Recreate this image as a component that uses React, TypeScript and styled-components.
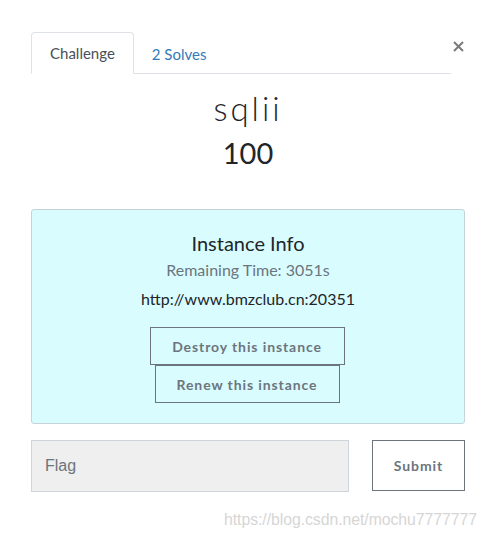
import React from "react";
import styled, { createGlobalStyle } from "styled-components";

const Global = createGlobalStyle`
  html, body { margin: 0; padding: 0; background: #fff; }
  body { font-family: Lato, "Open Sans", sans-serif; color: #212529; }
  * { box-sizing: border-box; }
`;

const Page = styled.div`
  width: 487px;
  height: 538px;
  padding: 32px 22px 0 31px;
  position: relative;
  overflow: hidden;
`;

const Header = styled.div`
  display: flex;
  align-items: flex-start;
`;

const Nav = styled.div`
  display: flex;
  width: 420px;
  border-bottom: 1px solid #dee2e6;
  height: 42px;
`;

const Tab = styled.div<{ $active?: boolean }>`
  height: 42px;
  padding: 0 ${(p) => (p.$active ? "18px" : "17px")};
  display: flex;
  align-items: center;
  font-size: 15px;
  color: ${(p) => (p.$active ? "#495057" : "#337ab7")};
  background: ${(p) => (p.$active ? "#fff" : "transparent")};
  border: 1px solid ${(p) => (p.$active ? "#dee2e6" : "transparent")};
  border-bottom: ${(p) => (p.$active ? "1px solid #fff" : "none")};
  border-radius: 4px 4px 0 0;
  margin-bottom: ${(p) => (p.$active ? "-1px" : "0")};
`;

const Close = styled.div`
  margin-left: 1px;
  margin-top: 4px;
  width: 12px;
  height: 20px;
  display: flex;
  align-items: center;
  justify-content: center;
`;

const Title = styled.h2`
  margin: 14px 0 0;
  text-align: center;
  font-weight: 300;
  font-size: 33px;
  letter-spacing: 3px;
  line-height: 40px;
  color: #212529;
`;

const Points = styled.h3`
  margin: 7px 0 0;
  text-align: center;
  font-weight: 400;
  font-size: 29px;
  line-height: 36px;
  color: #212529;
`;

const InfoBox = styled.div`
  margin-top: 38px;
  width: 434px;
  height: 215px;
  background: #d9fcff;
  border: 1px solid #c4d3d6;
  border-radius: 3px;
  display: flex;
  flex-direction: column;
  align-items: center;
  padding-top: 21px;
`;

const InfoTitle = styled.div`
  font-size: 20px;
  line-height: 24px;
  color: #212529;
`;

const Remaining = styled.div`
  margin-top: 5px;
  font-size: 16px;
  line-height: 20px;
  color: #6c757d;
`;

const Url = styled.div`
  margin-top: 9px;
  font-size: 16px;
  line-height: 20px;
  color: #212529;
`;

const Buttons = styled.div`
  margin: 18px 2px 0 0;
  display: flex;
  flex-direction: column;
  align-items: center;
`;

const OutlineButton = styled.button<{ $w: number }>`
  width: ${(p) => p.$w}px;
  height: 38px;
  background: transparent;
  border: 1px solid #6c757d;
  border-radius: 0;
  color: #6c757d;
  font-family: Lato, sans-serif;
  font-weight: 700;
  font-size: 14px;
  letter-spacing: 0.9px;
  padding: 0;
`;

const FlagRow = styled.div`
  margin-top: 16px;
  display: flex;
  justify-content: space-between;
  width: 434px;
`;

const FlagInput = styled.input`
  width: 318px;
  height: 52px;
  background: #efefef;
  border: 1px solid #ced4da;
  border-radius: 0;
  padding: 0 13px;
  font-family: "Liberation Sans", Arial, sans-serif;
  font-size: 16px;
  color: #495057;
  &::placeholder { color: #6c757d; }
`;

const SubmitButton = styled.button`
  width: 93px;
  height: 51px;
  background: #fff;
  border: 1px solid #6c757d;
  border-radius: 0;
  color: #6c757d;
  font-family: Lato, sans-serif;
  font-weight: 700;
  font-size: 14px;
  letter-spacing: 0.9px;
`;

const Watermark = styled.div`
  position: absolute;
  right: 10px;
  bottom: 9px;
  font-family: "Liberation Sans", Arial, sans-serif;
  font-size: 15.8px;
  letter-spacing: -0.05px;
  color: #d6d6d6;
`;

export default function App() {
  return (
    <>
      <Global />
      <Page>
        <Header>
          <Nav>
            <Tab $active>Challenge</Tab>
            <Tab>2 Solves</Tab>
          </Nav>
          <Close>
            <svg width="11" height="11" viewBox="0 0 11 11">
              <path d="M1 1 L10 10 M10 1 L1 10" stroke="#7a7a7a" strokeWidth="2" />
            </svg>
          </Close>
        </Header>
        <Title>sqlii</Title>
        <Points>100</Points>
        <InfoBox>
          <InfoTitle>Instance Info</InfoTitle>
          <Remaining>Remaining Time: 3051s</Remaining>
          <Url>http://www.bmzclub.cn:20351</Url>
          <Buttons>
            <OutlineButton $w={195}>Destroy this instance</OutlineButton>
            <OutlineButton $w={185}>Renew this instance</OutlineButton>
          </Buttons>
        </InfoBox>
        <FlagRow>
          <FlagInput placeholder="Flag" />
          <SubmitButton>Submit</SubmitButton>
        </FlagRow>
        <Watermark>https://blog.csdn.net/mochu7777777</Watermark>
      </Page>
    </>
  );
}
